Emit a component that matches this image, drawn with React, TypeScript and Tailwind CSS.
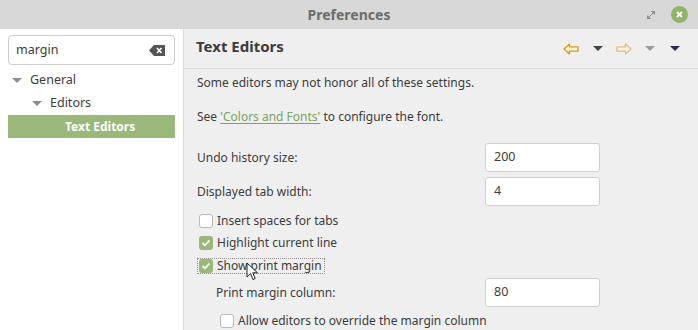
import React from "react";

const font = { fontFamily: '"Noto Sans", "Open Sans", sans-serif' };

const Caret = ({ color }: { color: string }) => (
  <svg width="10" height="6" viewBox="0 0 10 6">
    <path d="M0 0 L10 0 L5 5 Z" fill={color} />
  </svg>
);

const Arrow = ({ dir, pale }: { dir: "left" | "right"; pale?: boolean }) => (
  <svg
    width="16"
    height="12"
    viewBox="0 0 16 12"
    style={{ transform: dir === "right" ? "scaleX(-1)" : undefined }}
  >
    <path
      d="M1 6 L6.5 1 L6.5 3.8 L15 3.8 L15 8.2 L6.5 8.2 L6.5 11 Z"
      fill={pale ? "#fbf3de" : "#fff4d6"}
      stroke={pale ? "#dcc088" : "#d49a1e"}
      strokeWidth="1.3"
      strokeLinejoin="round"
    />
  </svg>
);

const Check = ({ checked }: { checked?: boolean }) =>
  checked ? (
    <span className="flex h-[14px] w-[14px] items-center justify-center rounded-[3px] bg-[#9ab87a]">
      <svg width="10" height="8" viewBox="0 0 10 8">
        <path d="M1.5 4 L4 6.3 L8.5 1.5" fill="none" stroke="#fff" strokeWidth="1.8" />
      </svg>
    </span>
  ) : (
    <span className="h-[14px] w-[14px] rounded-[3px] border border-[#b9b9b9] bg-white" />
  );

const Field = ({ value }: { value: string }) => (
  <div className="flex h-[29px] w-[115px] items-center rounded-[3px] border border-[#cfcfcf] bg-white px-[8px] text-[12.5px] text-[#3c3c3c]">
    {value}
  </div>
);

export default function App() {
  return (
    <div className="flex h-[330px] w-[698px] flex-col overflow-hidden bg-[#efefef] text-[12px] text-[#3c3c3c]" style={font}>
      <div className="relative flex h-[29px] shrink-0 items-center justify-center bg-[#d8d8d8]">
        <span className="text-[14px] font-bold text-[#6c6c6c]">Preferences</span>
        <div className="absolute right-[10px] top-[6px] flex items-center gap-[16px]">
          <svg width="8" height="8" viewBox="0 0 8 8">
            <path d="M0 8 L0 4.5 L3.5 8 Z M8 0 L8 3.5 L4.5 0 Z M1.5 6.5 L6.5 1.5" stroke="#8a8a8a" fill="#8a8a8a" strokeWidth="1" />
          </svg>
          <span className="flex h-[17px] w-[17px] items-center justify-center rounded-full bg-[#8db66a]">
            <svg width="7" height="7" viewBox="0 0 7 7">
              <path d="M1 1 L6 6 M6 1 L1 6" stroke="#fff" strokeWidth="1.8" />
            </svg>
          </span>
        </div>
      </div>

      <div className="flex min-h-0 flex-1">
        <div className="flex w-[184px] shrink-0 flex-col border-r border-[#dadada] bg-white px-[8px] pt-[6px]">
          <div className="flex h-[30px] items-center justify-between rounded-[4px] border border-[#cdcdcd] bg-white pl-[7px] pr-[9px] text-[12.5px]">
            <span>margin</span>
            <svg width="16" height="11" viewBox="0 0 16 11">
              <path d="M0 5.5 L5 0 L16 0 L16 11 L5 11 Z" fill="#555" />
              <path d="M8 3 L12.5 8 M12.5 3 L8 8" stroke="#fff" strokeWidth="1.6" />
            </svg>
          </div>
          <div className="mt-[4px] flex h-[23px] items-center gap-[8px] pl-[4px] text-[12.5px]">
            <Caret color="#8e8e8e" />
            <span>General</span>
          </div>
          <div className="flex h-[23px] items-center gap-[8px] pl-[24px] text-[12.5px]">
            <Caret color="#8e8e8e" />
            <span>Editors</span>
          </div>
          <div className="flex h-[23px] items-center bg-[#9ab87a] pl-[57px] font-bold text-white">
            Text Editors
          </div>
        </div>

        <div className="relative flex min-w-0 flex-1 flex-col">
          <div className="flex h-[40px] shrink-0 items-center justify-between border-b border-[#d9d9d9] pl-[12px] pr-[18px]">
            <span className="-mt-[4px] text-[15px] font-bold text-[#3c3c3c]">Text Editors</span>
            <div className="flex items-center">
              <Arrow dir="left" />
              <span className="ml-[14px]"><Caret color="#454545" /></span>
              <span className="ml-[13px]"><Arrow dir="right" pale /></span>
              <span className="ml-[13px]"><Caret color="#9a9a9a" /></span>
              <span className="ml-[15px]"><Caret color="#34225a" /></span>
            </div>
          </div>

          <div className="flex flex-col pl-[13px] pr-[98px]">
            <div className="mt-[4px] leading-[20px]">Some editors may not honor all of these settings.</div>
            <div className="mt-[14px] leading-[20px]">
              See <span className="text-[#7da45c] underline underline-offset-2">'Colors and Fonts'</span> to configure the font.
            </div>

            <div className="mt-[16px] flex items-center justify-between">
              <span>Undo history size:</span>
              <Field value="200" />
            </div>
            <div className="mt-[5px] flex items-center justify-between">
              <span>Displayed tab width:</span>
              <Field value="4" />
            </div>

            <div className="mt-[4px] flex h-[22px] items-center gap-[4px] pl-[2px]">
              <Check />
              <span>Insert spaces for tabs</span>
            </div>
            <div className="flex h-[22px] items-center gap-[4px] pl-[2px]">
              <Check checked />
              <span>Highlight current line</span>
            </div>
            <div className="flex h-[23px] items-center">
              <div className="flex items-center gap-[4px] border border-dotted border-[#8c8c8c] pl-[1px] pr-[2px]">
                <Check checked />
                <span className="leading-[14px]">Show print margin</span>
              </div>
            </div>

            <div className="mt-[1px] flex items-center justify-between pl-[19px]">
              <span>Print margin column:</span>
              <Field value="80" />
            </div>
            <div className="mt-[5px] flex h-[18px] items-center gap-[4px] pl-[23px]">
              <Check />
              <span>Allow editors to override the margin column</span>
            </div>
          </div>

          <svg className="absolute left-[62px] top-[233px]" width="14" height="20" viewBox="0 0 14 20">
            <path d="M1 1 L1 15 L4.5 11.5 L7 17.5 L9.2 16.5 L6.8 10.8 L11.5 10.8 Z" fill="#fff" stroke="#222" strokeWidth="1" strokeLinejoin="round" />
          </svg>
        </div>
      </div>
    </div>
  );
}
